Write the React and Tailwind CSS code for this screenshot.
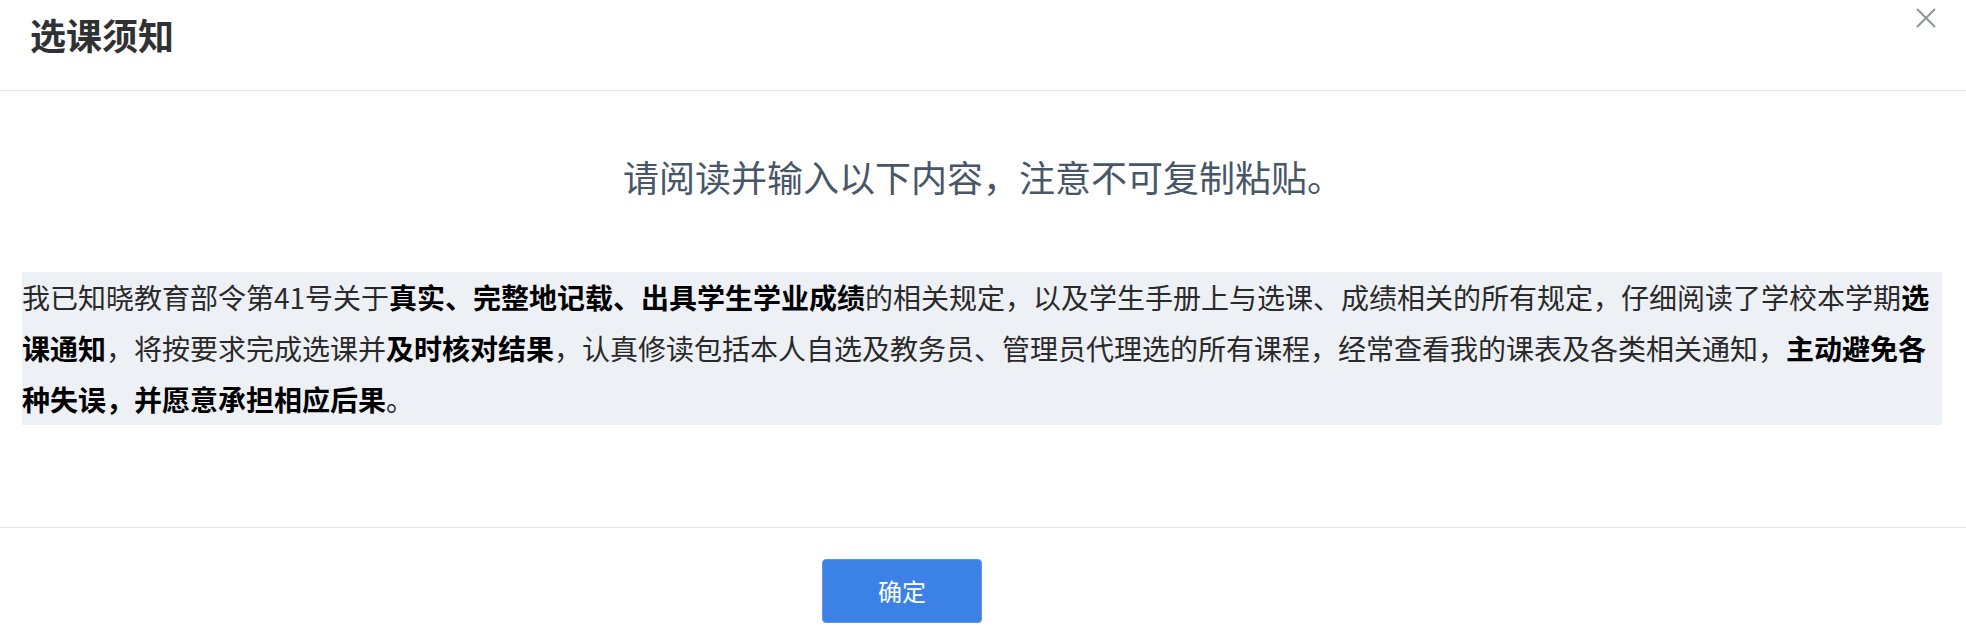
import React from 'react';

const CJK = "font-['Noto_Sans_CJK_SC','Noto_Sans',sans-serif]";

const NoticeText = () => {
    return (
        <p className={`ml-[22px] w-[1920px] bg-[#edf0f5] text-[28px] leading-[51px] text-[#2a2a2a] ${CJK}`}>
            我已知晓教育部令第41号关于<b className="font-semibold text-black">真实、完整地记载、出具学生学业成绩</b>的相关规定，以及学生手册上与选课、成绩相关的所有规定，仔细阅读了学校本学期<b className="font-semibold text-black">选课通知</b>，将按要求完成选课并<b className="font-semibold text-black">及时核对结果</b>，认真修读包括本人自选及教务员、管理员代理选的所有课程，经常查看我的课表及各类相关通知，<b className="font-semibold text-black">主动避免各种失误，并愿意承担相应后果</b>。
        </p>
    );
};

const App = () => {
    return (
        <div className={`relative w-[1966px] h-[632px] bg-white overflow-hidden ${CJK}`}>
            {/* header */}
            <div className="h-[91px] border-b border-[#e4e4e4] pl-[30px] pt-[16px]">
                <h2 className="text-[36px] leading-[36px] font-bold text-[#303133]">选课须知</h2>
            </div>
            <button className="absolute left-[1916px] top-[8px] w-[20px] h-[20px] text-[#909399]">
                <svg width="20" height="20" viewBox="0 0 20 20" fill="none" stroke="currentColor" strokeWidth="2">
                    <path d="M1 1 L19 19 M19 1 L1 19" />
                </svg>
            </button>

            {/* body */}
            <div className="pt-[67px] pb-[102px]">
                <div className="text-center text-[36px] leading-[36px] text-[#475669]">请阅读并输入以下内容，注意不可复制粘贴。</div>
                <div className="mt-[78px]">
                    <NoticeText />
                </div>
            </div>

            {/* footer */}
            <div className="border-t border-[#e4e4e4] pt-[31px]">
                <button className="ml-[822px] w-[160px] h-[64px] rounded-[4px] bg-[#3c82e6] border border-[#5a95ea] text-white text-[24px] leading-[24px]">
                    确定
                </button>
            </div>
        </div>
    );
};

export default App;
